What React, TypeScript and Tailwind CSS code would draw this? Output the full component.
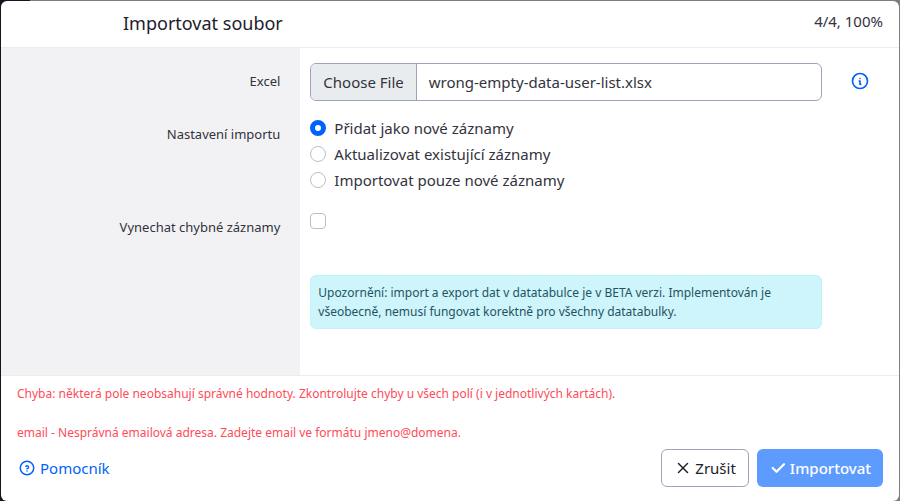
import { useState } from "react";
import type { ReactNode } from "react";
import { TbCheck, TbHelpCircle, TbInfoCircle, TbX } from "react-icons/tb";

type RowProps = {
  label?: ReactNode;
  children: ReactNode;
  aside?: ReactNode;
  className: string;
};

function Row({ label, children, aside, className }: RowProps) {
  return (
    <div className="grid grid-cols-12">
      <div className={`col-span-4 bg-[#f2f2f4] pr-5 text-right text-[13px] leading-5 ${className}`}>{label}</div>
      <div className="col-span-7 pl-[10px] pr-[2px]">{children}</div>
      <div className="col-span-1">{aside}</div>
    </div>
  );
}

const modes = [
  { value: "append", label: "Přidat jako nové záznamy" },
  { value: "update", label: "Aktualizovat existující záznamy" },
  { value: "onlyNew", label: "Importovat pouze nové záznamy" },
];

export default function App() {
  const [fileName, setFileName] = useState("wrong-empty-data-user-list.xlsx");
  const [mode, setMode] = useState("append");
  const [skip, setSkip] = useState(false);

  return (
    <div className="flex min-h-screen flex-col bg-[linear-gradient(to_right,#15141f_30px,#7d7d7f_30px)] p-px font-['Noto_Sans','Open_Sans',sans-serif] text-[#33333d]">
      <div role="dialog" aria-labelledby="title" className="flex flex-1 flex-col overflow-hidden rounded-md bg-white">
        <header className="flex h-[47px] items-start justify-between border-b border-[#ececee] pl-[122px] pr-4">
          <h1 id="title" className="pt-2 text-lg leading-7 text-[#21212b]">Importovat soubor</h1>
          <div className="pt-2 text-[15px] leading-6">4/4, 100%</div>
        </header>

        <main className="flex flex-1 flex-col">
          <Row
            className="pt-[23px]"
            label={<label htmlFor="file">Excel</label>}
            aside={
              <button type="button" aria-label="Info" className="ml-[26px] mt-[23px] block text-[#0063fb]">
                <TbInfoCircle size={20} />
              </button>
            }
          >
            <div className="pb-[14px] pt-[15px]">
              <label className="flex h-[38px] cursor-pointer items-stretch overflow-hidden rounded-md border border-[#9da3bb] text-[15px] leading-9">
                <input
                  id="file"
                  type="file"
                  className="sr-only"
                  onChange={(e) => setFileName(e.target.files?.[0]?.name ?? "")}
                />
                <span className="border-r border-[#9da3bb] bg-[#e9ecef] px-3">Choose File</span>
                <span className="px-3">{fileName}</span>
              </label>
            </div>
          </Row>

          <Row className="pt-[9px]" label={<span id="mode">Nastavení importu</span>}>
            <div role="radiogroup" aria-labelledby="mode" className="pb-[13px]">
              {modes.map((m) => (
                <label key={m.value} className="flex h-[26px] items-center gap-2 text-[15px]">
                  <input
                    type="radio"
                    name="mode"
                    value={m.value}
                    checked={mode === m.value}
                    onChange={() => setMode(m.value)}
                    className="size-4 appearance-none rounded-full border border-[#bfbfc1] bg-white checked:border-[5px] checked:border-[#0063fb]"
                  />
                  {m.label}
                </label>
              ))}
            </div>
          </Row>

          <Row className="pt-[11px]" label={<label htmlFor="skip">Vynechat chybné záznamy</label>}>
            <div className="pb-[46px] pt-[7px]">
              <input
                id="skip"
                type="checkbox"
                checked={skip}
                onChange={(e) => setSkip(e.target.checked)}
                className="block size-4 appearance-none rounded border border-[#bfbfc1] bg-white checked:bg-[#0063fb]"
              />
            </div>
          </Row>

          <div className="flex flex-1 flex-col *:flex-1">
            <Row className="">
              <p className="mb-[46px] rounded-md border border-[#bdf3fa] bg-[#cef4fc] px-[7px] py-[7px] text-xs leading-[19px] text-[#1f5561]">
                Upozornění: import a export dat v datatabulce je v BETA verzi. Implementován je všeobecně, nemusí
                fungovat korektně pro všechny datatabulky.
              </p>
            </Row>
          </div>
        </main>

        <footer className="border-t border-[#ececee] px-4 pb-[14px] pt-2">
          <div className="flex flex-col gap-5 text-xs leading-[19px] text-[#ff4b58]">
            <p>Chyba: některá pole neobsahují správné hodnoty. Zkontrolujte chyby u všech polí (i v jednotlivých kartách).</p>
            <p>email - Nesprávná emailová adresa. Zadejte email ve formátu jmeno@domena.</p>
          </div>
          <div className="mt-[7px] flex items-center justify-between text-[15px]">
            <a href="#help" className="flex items-center gap-1 pl-px text-[#0063fb]">
              <TbHelpCircle size={18} />
              Pomocník
            </a>
            <div className="flex gap-2">
              <button type="button" className="flex h-[38px] items-center gap-[3px] rounded-md border border-[#9da3bb] px-3 text-[#21212b]">
                <TbX size={18} />
                Zrušit
              </button>
              <button type="button" className="flex h-[38px] items-center gap-[3px] rounded-md bg-[#5e9bff] px-3 font-medium text-white">
                <TbCheck size={18} strokeWidth={3} />
                Importovat
              </button>
            </div>
          </div>
        </footer>
      </div>
    </div>
  );
}
